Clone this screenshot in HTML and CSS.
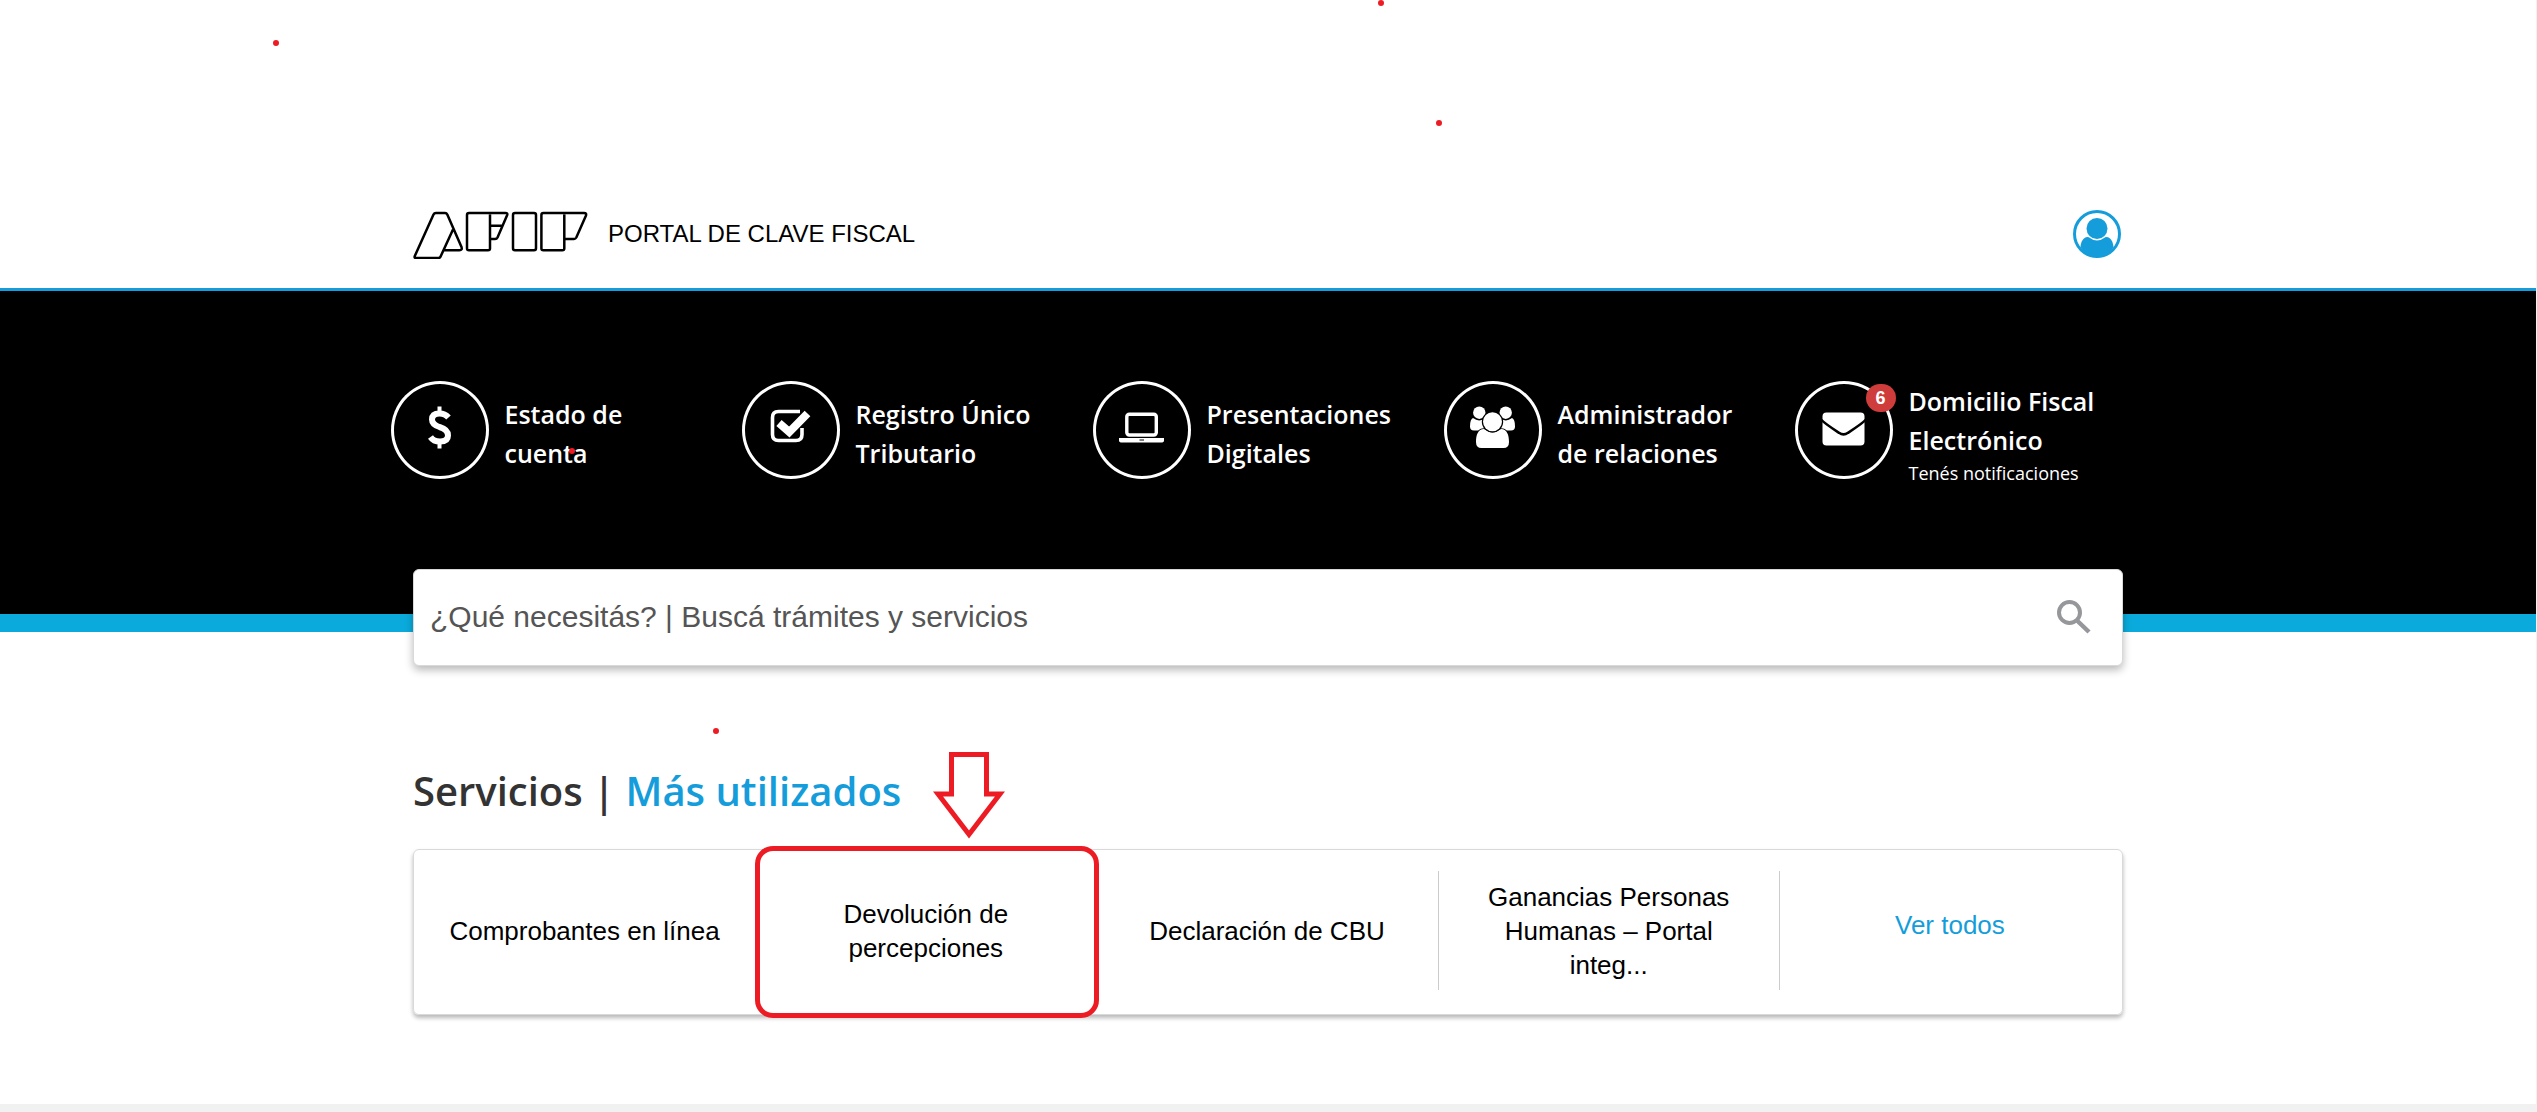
FILE: index.html
```html
<!DOCTYPE html>
<html lang="es">
<head>
<meta charset="utf-8">
<meta name="viewport" content="width=device-width, initial-scale=1">
<title>AFIP - Portal de Clave Fiscal</title>
<link rel="stylesheet" href="styles.css">
</head>
<body>
<header class="topbar">
  <div class="container topbar-row">
    <a class="brand" href="#">
      <svg class="logo" viewBox="0 -2 176 50" role="img" aria-label="AFIP">
        <path d="M40 18.500L27.600 45.500Q27 47 25.500 47H3Q1 47 1.800 45L20.500 3.500Q21.200 2 23 2H32Q33.600 2 34.300 3.500L48.500 36Q49.500 39.300 46.500 39.300H31"/>
        <path d="M77 3.500V37.500Q77 39.300 75 39.300H56Q54 39.300 54 37.500V4Q54 2 56 2H92.500Q95 2 94.200 4L84.500 26.500Q83.800 28 82 28H77M77 14.700H89"/>
        <rect x="100" y="2" width="23" height="37.300" rx="2"/>
        <path d="M151.300 3.500V37.500Q151.300 39.300 149.300 39.300H130.400Q128.400 39.300 128.400 37.500V4Q128.400 2 130.400 2H171Q173.800 2 173 4.500L163.300 26.500Q162.500 28 161 28H151.300"/>
      </svg>
      <span>PORTAL DE CLAVE FISCAL</span>
    </a>
    <button class="user" type="button" aria-label="Usuario">
      <svg viewBox="0 0 48 48">
        <circle cx="24" cy="24" r="22.500" fill="#fff" stroke="#159ddb" stroke-width="3"/>
        <circle cx="24" cy="18.500" r="10.500" fill="#159ddb"/>
        <path d="M7.500 37C8 31.500 10 27.500 14.500 27Q16 27 17 28Q24 33 31 28Q32 27 33.500 27C38 27.500 40 31.500 40.500 37Q35 46.500 24 46.500T7.500 37Z" fill="#159ddb"/>
      </svg>
    </button>
  </div>
</header>

<section class="hero">
  <nav class="container shortcuts">
    <a class="shortcut" href="#">
      <span class="disc"><svg viewBox="0 0 98 98"><path d="M57.500 36.500Q54 32.500 48.500 32.500Q41 32.500 41 38.500Q41 43.500 48.500 46Q57 48.500 57 54.500Q57 60.500 49 60.500Q42.500 60.500 39.500 56" fill="none" stroke="#fff" stroke-width="6"/><path d="M46.500 25.500h4v8h-4zM46.500 60h4v7.500h-4z" fill="#fff"/></svg></span>
      <span class="label"><b>Estado de<br>cuenta</b></span>
    </a>
    <a class="shortcut" href="#">
      <span class="disc"><svg viewBox="0 0 98 98" fill="none" stroke="#fff"><path d="M58 30.500H36.500Q30.500 30.500 30.500 36.500V53.500Q30.500 59.500 36.500 59.500H54Q60 59.500 60 53.500V47" stroke-width="3.600"/><path d="M37 42L47.300 51L65.500 32.500" stroke-width="8"/></svg></span>
      <span class="label"><b>Registro Único<br>Tributario</b></span>
    </a>
    <a class="shortcut" href="#">
      <span class="disc"><svg viewBox="0 0 98 98"><rect x="33.800" y="33.200" width="29.500" height="20.800" rx="2.500" fill="none" stroke="#fff" stroke-width="3.400"/><path d="M26 57H71V59.500Q71 61.500 68 61.500H29Q26 61.500 26 59.500Z" fill="#fff"/><path d="M46.500 59h4.500" stroke="#000"/></svg></span>
      <span class="label"><b>Presentaciones<br>Digitales</b></span>
    </a>
    <a class="shortcut" href="#">
      <span class="disc"><svg viewBox="0 0 98 98" fill="#fff"><circle cx="35.300" cy="31.700" r="6.200"/><circle cx="61.700" cy="31.700" r="6.200"/><path d="M29 37Q35 41.500 40 37.500V49.500H30Q26 49.500 26 45.500Q26 38 29 37ZM68 37Q62 41.500 57 37.500V49.500H67Q71 49.500 71 45.500Q71 38 68 37Z"/><path d="M40 48Q48.500 55 57 48C63 48 65 54 65 61Q65 67 59.500 67H37.500Q32 67 32 61C32 54 34 48 40 48Z" stroke="#000" stroke-width="1.500" paint-order="stroke"/><circle cx="48.500" cy="40.700" r="9.500" stroke="#000" stroke-width="2.400" paint-order="stroke"/></svg></span>
      <span class="label"><b>Administrador<br>de relaciones</b></span>
    </a>
    <a class="shortcut" href="#">
      <span class="disc"><svg viewBox="0 0 98 98"><rect x="27.500" y="31.500" width="42" height="33" rx="4" fill="#fff"/><path d="M26 38.500Q29 42 44 51.800Q48.500 55 53 51.800Q68 42 71 38.500" fill="none" stroke="#000" stroke-width="2.600"/></svg><i class="badge">6</i></span>
      <span class="label"><b>Domicilio Fiscal<br>Electrónico</b><small>Tenés notificaciones</small></span>
    </a>
  </nav>
</section>

<main class="container">
  <form class="search">
    <input type="text" aria-label="Buscar trámites y servicios" placeholder="¿Qué necesitás? | Buscá trámites y servicios">
    <button type="submit" aria-label="Buscar">
      <svg viewBox="0 0 34 34" fill="none" stroke="#96979a"><circle cx="12.500" cy="12.500" r="10.500" stroke-width="4"/><path d="M20 20.500L32 32" stroke-width="4.500"/></svg>
    </button>
  </form>

  <h1>Servicios | <span>Más utilizados</span></h1>

  <div class="services">
    <a href="#">Comprobantes en línea</a>
    <a class="marked" href="#">Devolución de percepciones
      <svg class="arrow" viewBox="0 0 72 88"><path d="M18.500 3.500H53.500V43H67L36 83.500L5 43H18.500Z"/></svg>
    </a>
    <a href="#">Declaración de CBU</a>
    <a class="ruled" href="#">Ganancias Personas Humanas – Portal integ...</a>
    <a class="ruled all" href="#">Ver todos</a>
  </div>
</main>
<footer class="footer"></footer>

<i class="dot dot-1"></i>
<i class="dot dot-2"></i>
<i class="dot dot-3"></i>
<i class="dot dot-4"></i>
<i class="dot dot-5"></i>
</body>
</html>
```

FILE: styles.css
```css
* { box-sizing: border-box; }

body {
  position: relative;
  display: flex;
  flex-direction: column;
  min-height: 100vh;
  margin: 0;
  border-right: 1px solid #f1f1f1;
  background: #fff;
  color: #000;
  font-family: "Liberation Sans", Arial, sans-serif;
}

a { color: inherit; text-decoration: none; }
svg { display: block; }
button { padding: 0; border: 0; background: none; cursor: pointer; }

.container {
  width: calc(100% - 40px);
  max-width: 1710px;
  margin: 0 auto;
}

/* Header */
.topbar {
  padding: 209px 0 29px;
  border-bottom: 3px solid #159ddb;
}
.topbar-row {
  display: flex;
  align-items: center;
  justify-content: space-between;
  padding-right: 2px;
}
.brand {
  display: flex;
  align-items: center;
  gap: 19px;
  font-size: 24px;
  line-height: 32px;
}
.logo {
  width: 176px;
  height: 50px;
  fill: none;
  stroke: #000;
  stroke-width: 2.5;
  stroke-linejoin: round;
}
.user { width: 48px; height: 48px; }

/* Shortcuts */
.hero {
  padding: 90px 0 127px;
  border-bottom: 18px solid #0aabdc;
  background: #000;
  color: #fff;
}
.shortcuts {
  display: grid;
  grid-template-columns: repeat(5, 1fr);
  max-width: 1755px;
}
.shortcut {
  display: flex;
  align-items: center;
  gap: 16px;
}
.disc {
  position: relative;
  flex: none;
  width: 98px;
  height: 98px;
  margin-bottom: 8px;
  border-radius: 50%;
  box-shadow: inset 0 0 0 3px #fff;
}
.badge {
  position: absolute;
  top: 3px;
  right: -3px;
  width: 30px;
  height: 28px;
  border-radius: 14px;
  background: #cf3c3c;
  font-size: 18px;
  font-style: normal;
  font-weight: 700;
  line-height: 28px;
  text-align: center;
}
.label {
  font-family: "Open Sans", sans-serif;
  font-size: 25px;
  line-height: 39px;
}
.label b { display: block; font-weight: 600; }
.label small {
  display: block;
  font-size: 18px;
  font-weight: 400;
  line-height: 26px;
}

/* Search */
.search {
  position: relative;
  display: flex;
  align-items: center;
  height: 97px;
  margin-top: -63px;
  padding: 0 31px 2px 16px;
  border: 1px solid #d9d9d9;
  border-radius: 6px;
  background: #fff;
  box-shadow: 0 4px 8px rgba(0, 0, 0, 0.28);
}
.search input {
  flex: 1;
  min-width: 0;
  padding: 0;
  border: 0;
  outline: 0;
  background: none;
  font: 30px "Liberation Sans", Arial, sans-serif;
}
.search input::placeholder { color: #555; opacity: 1; }
.search svg { width: 34px; height: 34px; }

/* Services */
h1 {
  margin: 95px 0 28px;
  color: #333;
  font: 600 40px/60px "Open Sans", sans-serif;
}
h1 span { color: #159ddb; }
.services {
  display: grid;
  grid-template-columns: repeat(5, 1fr);
  height: 166px;
  margin-bottom: 89px;
  padding: 21px 2px 24px 0;
  border: 1px solid #d9d9d9;
  border-radius: 6px;
  box-shadow: 0 3px 4px rgba(0, 0, 0, 0.28);
  font-size: 26px;
  line-height: 34px;
  text-align: center;
}
.services a {
  display: flex;
  align-items: center;
  justify-content: center;
  padding: 0 28px;
}
.services .ruled { border-left: 1px solid #ccc; }
.services .all {
  padding-bottom: 12px;
  color: #159ddb;
}

.footer { flex: 1 0 8px; background: #f1f1f1; }

/* Hand-drawn annotations */
.services .marked { position: relative; padding: 0 60px; }
.marked::after {
  content: "";
  position: absolute;
  inset: -25px -3px -28px 0;
  border: 5px solid #ed1c24;
  border-radius: 18px;
}
.arrow {
  position: absolute;
  bottom: calc(100% + 32px);
  left: 178px;
  width: 72px;
  height: 88px;
  fill: none;
  stroke: #ed1c24;
  stroke-width: 5;
}
.dot {
  position: absolute;
  width: 6px;
  height: 6px;
  border-radius: 50%;
  background: #ed1c24;
}
.dot-1 { top: 40px; left: calc(50% - 995px); }
.dot-2 { top: 0; left: calc(50% + 110px); }
.dot-3 { top: 120px; left: calc(50% + 168px); }
.dot-4 { top: 448px; left: calc(50% - 699px); }
.dot-5 { top: 728px; left: calc(50% - 555px); }
```
